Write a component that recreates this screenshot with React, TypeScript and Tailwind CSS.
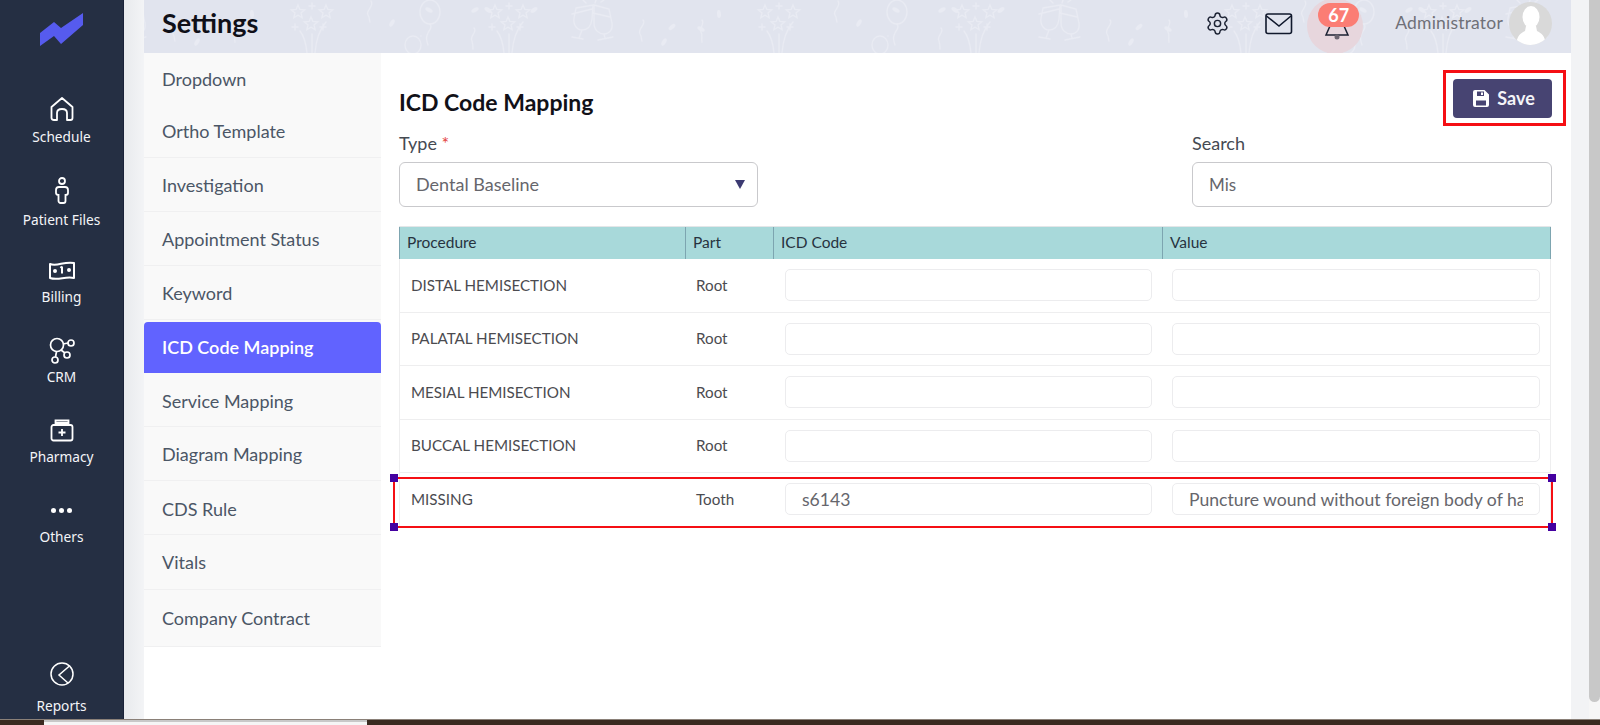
import { Settings } from "lucide-react"

const menu = [
  { name: "Dropdown", h: "h-[52.5px]", line: false },
  { name: "Ortho Template", h: "h-[52.5px]", line: true },
  { name: "Investigation", h: "h-[54px] pt-[2px]", line: true },
  { name: "Appointment Status", h: "h-[54px] pt-[2px]", line: true },
  { name: "Keyword", h: "h-[54px] pt-[2px]", line: true },
  { name: "ICD Code Mapping", h: "h-[53px] pt-[2px]", line: false, active: true },
  { name: "Service Mapping", h: "h-[54px] pt-[3px]", line: true },
  { name: "Diagram Mapping", h: "h-[54px] pt-[2px]", line: true },
  { name: "CDS Rule", h: "h-[54px] pt-[3px]", line: true },
  { name: "Vitals", h: "h-[55px]", line: true },
  { name: "Company Contract", h: "h-[57px]", line: true },
]

const rows = [
  { procedure: "DISTAL HEMISECTION", part: "Root", code: "", value: "" },
  { procedure: "PALATAL HEMISECTION", part: "Root", code: "", value: "" },
  { procedure: "MESIAL HEMISECTION", part: "Root", code: "", value: "" },
  { procedure: "BUCCAL HEMISECTION", part: "Root", code: "", value: "" },
  { procedure: "MISSING", part: "Tooth", code: "s6143", value: "Puncture wound without foreign body of hand" },
]

function starPoints(cx: number, cy: number, r: number) {
  const pts: string[] = []
  for (let i = 0; i < 10; i++) {
    const rad = i % 2 === 0 ? r : r * 0.45
    const a = -Math.PI / 2 + (i * Math.PI) / 5
    pts.push(`${cx + rad * Math.cos(a)},${cy + rad * Math.sin(a)}`)
  }
  return pts.join(" ")
}

function Fireworks({ x }: { x: number }) {
  return (
    <g transform={`translate(${x} 0)`}>
      <polygon points={starPoints(8, 12, 7)} />
      <polygon points={starPoints(36, 12, 7)} />
      <polygon points={starPoints(21, 24, 7)} />
      <path d="M22 19h0M22 3v6M19 6h6M2 27h6M5 24v6M30 27h6M33 24v6M10 31c4 5 6 12 7 22M22 34v19M36 22c-6 7-10 18-11 31" />
    </g>
  )
}

function HeaderPattern() {
  return (
    <svg className="absolute inset-0 h-full w-full" aria-hidden="true">
      <defs>
        <pattern id="party" width="467" height="53" patternUnits="userSpaceOnUse" patternTransform="translate(336 0)">
          <g fill="none" stroke="#e9ebf3" strokeWidth="1.3" strokeLinecap="round">
            <Fireworks x={7} />
            <Fireworks x={277} />
            <path d="M96 8l17 -3 -1 14c-1 8-5 11-10 11s-9-5-8-12zM92 14l20-5M102 30l-3 8M92 37l11 2" />
            <path d="M114 5l15 4 3 14c1 7-3 11-8 11s-10-4-10-11zM113 13l17 4M124 34l1 4M118 40l15-3" />
            <path d="M103 0l3 3M116 0l-1 3M124 0l-3 2" />
            <path d="M163 20c4 4-6 9-3 14 2 3 1 5 2 7M222 20c3 4-3 8-1 12 2 3 0 6 1 10M358 1c4 5-6 10-3 14 2 3 1 5 2 7M461 28c4 4-5 8-2 13 1 3 1 5 1 8" />
            <ellipse cx="417" cy="12" rx="10" ry="12" />
            <path d="M417 24c3 4-1 6 -2 9-2 4-2 6 0 12M408 36h0" />
            <ellipse cx="400" cy="45" rx="8" ry="9" />
          </g>
          <g fill="#e9ebf3">
            <ellipse cx="8" cy="10" rx="4" ry="2" transform="rotate(35 8 10)" />
            <ellipse cx="54" cy="10" rx="4" ry="2" transform="rotate(-35 54 10)" />
            <ellipse cx="192" cy="27" rx="4" ry="2" transform="rotate(-40 192 27)" />
            <ellipse cx="184" cy="42" rx="4" ry="2" transform="rotate(-60 184 42)" />
            <ellipse cx="239" cy="14" rx="4" ry="2" transform="rotate(85 239 14)" />
            <ellipse cx="221" cy="29" rx="4" ry="2" transform="rotate(30 221 29)" />
            <ellipse cx="379" cy="23" rx="4" ry="2" transform="rotate(-60 379 23)" />
            <ellipse cx="462" cy="10" rx="4" ry="2" transform="rotate(-30 462 10)" />
            <ellipse cx="416" cy="10" rx="4" ry="2" transform="rotate(30 416 10)" />
          </g>
        </pattern>
      </defs>
      <rect width="100%" height="100%" fill="url(#party)" />
    </svg>
  )
}

function NavItem({ label, children, size, labelGap }: { label: string; children: React.ReactNode; size: string; labelGap: string }) {
  return (
    <div className={`flex w-full flex-col items-center ${size}`}>
      <div className="flex h-[32px] w-full items-center justify-center">{children}</div>
      <span className={`text-[13.7px] leading-[20px] text-[#f4f5f8] ${labelGap}`}>{label}</span>
    </div>
  )
}

function Sidebar() {
  return (
    <aside className="flex w-[124px] shrink-0 flex-col items-center border-r border-[#1a2238] bg-[#252f43] font-['Noto_Sans',sans-serif]">
      <div className="flex h-[93px] w-full items-start justify-center pt-[12px]">
        <svg width="44" height="34" viewBox="41 12 44 34">
          <polygon points="41,33 55,22 62,28 84,13 84,25 62,44 55,36 41,46" fill="#565bee" />
        </svg>
      </div>
      <NavItem label="Schedule" size="h-[81px]" labelGap="mt-[2px]">
        <svg width="26" height="26" viewBox="0 0 26 26" fill="none" stroke="white" strokeWidth="1.8" strokeLinejoin="round">
          <path d="M2.5 11L13 2l10.500 9v11c0 1.500-1 2-2 2h-3.500v-7c0-2.500-2-4-5-4s-5 1.500-5 4v7H5c-1.500 0-2.500-.5-2.500-2z" />
        </svg>
      </NavItem>
      <NavItem label="Patient Files" size="h-[80px]" labelGap="mt-[4px]">
        <svg className="mt-[1px]" width="16" height="28" viewBox="0 0 16 28" fill="none" stroke="white" strokeWidth="1.8">
          <circle cx="8" cy="4" r="3" />
          <path d="M5 10h6c2 0 3 1 3 3v3c0 1.500-1 2-2.500 2v6c0 1-1 2-2 2h-3c-1 0-2-1-2-2v-6C3 18 2 17.500 2 16v-3c0-2 1-3 3-3z" />
        </svg>
      </NavItem>
      <NavItem label="Billing" size="h-[80px]" labelGap="mt-[1px]">
        <svg width="26" height="20" viewBox="0 0 26 20" fill="none" stroke="white" strokeWidth="2">
          <path d="M1 4c7 3 14-3 24-1v15c-9-2-16 3-24 0z" strokeLinejoin="round" />
          <circle cx="6" cy="11" r="1" fill="white" />
          <circle cx="20" cy="10" r="1" fill="white" />
          <path d="M13 6.500v7M11.500 8l1.500-1.500" />
        </svg>
      </NavItem>
      <NavItem label="CRM" size="h-[80px]" labelGap="mt-[1px]">
        <svg width="26" height="27" viewBox="0 0 26 27" fill="none" stroke="white" strokeWidth="1.700">
          <circle cx="8" cy="8" r="6.500" />
          <circle cx="22" cy="6" r="3" />
          <circle cx="18" cy="18" r="3" />
          <circle cx="6" cy="23" r="3" />
          <path d="M14 7l5-1M12 13l4 3M7.500 14.500L6.500 20" />
        </svg>
      </NavItem>
      <NavItem label="Pharmacy" size="h-[80px]" labelGap="mt-[1px]">
        <svg width="24" height="24" viewBox="0 0 24 24" fill="none" stroke="white" strokeWidth="1.800">
          <rect x="1.500" y="7" width="21" height="15.500" rx="2" />
          <path d="M5.500 7V2.500h13V7M6 5h12M12 11v7M8.500 14.500h7" />
        </svg>
      </NavItem>
      <NavItem label="Others" size="h-[80px]" labelGap="mt-[1px]">
        <div className="flex gap-[3px]">
          <span className="h-[5px] w-[5px] rounded-full bg-white" />
          <span className="h-[5px] w-[5px] rounded-full bg-white" />
          <span className="h-[5px] w-[5px] rounded-full bg-white" />
        </div>
      </NavItem>
      <div className="flex-1" />
      <div className="flex h-[57px] w-full flex-col items-center">
        <svg width="24" height="24" viewBox="0 0 24 24" fill="none" stroke="white" strokeWidth="1.500">
          <circle cx="12" cy="12" r="11" />
          <path d="M20 3.500L9 13l9 8" />
        </svg>
        <span className="mt-[10px] text-[13.7px] leading-[20px] text-[#f4f5f8]">Reports</span>
      </div>
    </aside>
  )
}

function TopBar() {
  return (
    <header className="relative flex h-[53px] items-center overflow-hidden bg-[#e1e4ee] pb-[6px] pl-[18px] pr-[19px]">
      <HeaderPattern />
      <h1 className="relative flex-1 text-[27px] font-bold text-[#101018]">Settings</h1>
      <Settings className="relative mr-[35px] h-[25px] w-[25px] text-[#1c2233]" strokeWidth={1.4} />
      <svg className="relative mr-[14px]" width="28" height="22" viewBox="0 0 28 22" fill="none" stroke="#10182c" strokeWidth="1.600">
        <rect x="1" y="1" width="25.500" height="19.500" rx="2" />
        <path d="M1.500 3l12.500 10L26 3" />
      </svg>
      <div className="relative mr-[32px] -mt-[2px] h-[56px] w-[56px] self-start rounded-full bg-[#e7d6dd]">
        <svg className="absolute left-[17px] top-[22px]" width="26" height="20" viewBox="0 0 26 20" fill="none" stroke="#1c2233" strokeWidth="1.500">
          <path d="M6 6L2 15h22l-4-9" />
          <circle cx="13" cy="17" r="2.500" fill="#6b6470" stroke="none" />
        </svg>
        <span className="absolute left-[11px] top-[5px] flex h-[24px] w-[41px] items-center justify-center rounded-full bg-[#fb7d74] text-[18px] font-bold text-white">67</span>
      </div>
      <span className="relative mr-[6px] text-[17.500px] tracking-[0.2px] text-[#6f7078]">Administrator</span>
      <div className="relative h-[43px] w-[43px] overflow-hidden rounded-full bg-[#d9d9d9]">
        <svg width="43" height="43" viewBox="0 0 43 43" fill="white">
          <ellipse cx="22" cy="15" rx="8.500" ry="11" />
          <path d="M17 24l-1 5c-4 2-8 4-9 14h30c-1-10-5-12-9-14l-1-5z" />
        </svg>
      </div>
    </header>
  )
}

function SettingsMenu() {
  return (
    <nav className="w-[237px] shrink-0 self-start">
      {menu.map((item) => (
        <div key={item.name} className={`flex items-center bg-[#f9f9f9] ${item.h} ${item.line ? "border-b border-[#f0f0f1]" : ""}`}>
          {item.active ? (
            <div className="flex h-full w-full items-center rounded-t-[4px] bg-[#6163ff] pl-[18px] text-[18px] font-semibold text-white">{item.name}</div>
          ) : (
            <span className="pl-[18px] text-[18px] text-[#4b5666]">{item.name}</span>
          )}
        </div>
      ))}
    </nav>
  )
}

function MappingTable() {
  return (
    <div className="mt-[19px] w-[1152px] border-t border-[#e4e6e8] text-[15.200px] text-[#4b4b50]">
      <div className="grid h-[32px] grid-cols-[287px_88px_389px_388px] items-center bg-[#a8d9da] text-[15.500px] text-[#27333f]">
        <div className="flex h-full items-center border-x border-[#7da5b0] pl-[7px]">Procedure</div>
        <div className="flex h-full items-center border-r border-[#7da5b0] pl-[7px]">Part</div>
        <div className="flex h-full items-center border-r border-[#7da5b0] pl-[7px]">ICD Code</div>
        <div className="flex h-full items-center border-r border-[#7da5b0] pl-[7px]">Value</div>
      </div>
      {rows.map((row) => (
        <div key={row.procedure} className="grid h-[53.500px] grid-cols-[287px_88px_389px_388px] items-center border-x border-b border-[#eeeeef]">
          <div className="pl-[11px]">{row.procedure}</div>
          <div className="pl-[9px]">{row.part}</div>
          <div className="pl-[10px]">
            <input readOnly value={row.code} className="h-[32px] w-[367px] rounded-[5px] border border-[#ececee] px-[16px] text-[17.600px] text-[#66666c] outline-none" />
          </div>
          <div className="pl-[8px]">
            <input readOnly value={row.value} className="h-[32px] w-[368px] rounded-[5px] border border-[#ececee] px-[16px] text-[17.600px] text-[#66666c] outline-none" />
          </div>
        </div>
      ))}
    </div>
  )
}

function Handle({ className }: { className: string }) {
  return <span className={`absolute h-[8px] w-[8px] bg-[#4400a0] ${className}`} />
}

function ContentPanel() {
  return (
    <section className="relative flex-1 pl-[18px] pr-[19px] pt-[26px]">
      <div className="flex items-end justify-between">
        <h2 className="mb-[1px] text-[23px] font-bold leading-[30px] text-[#111118]">ICD Code Mapping</h2>
        <button className="flex h-[39px] w-[99px] items-center justify-center gap-[8px] rounded-[4px] bg-[#474472] pl-[3px] text-[18px] font-bold text-[#f4f4f8]">
          <svg width="16" height="17" viewBox="0 0 16 17" fill="white">
            <path d="M0 2a2 2 0 0 1 2-2h9.500L16 4.500V15a2 2 0 0 1-2 2H2a2 2 0 0 1-2-2zM4 1.500V6h7V1.500zM8 2.500h2V5H8zM3 10.500V15.500h10v-5z" fillRule="evenodd" />
          </svg>
          Save
        </button>
      </div>
      <div className="mt-[16px] flex justify-between">
        <div>
          <label className="block h-[20px] text-[18px] leading-[18px] text-[#454a52]">
            Type <span className="text-[#e4433c]">*</span>
          </label>
          <div className="mt-[8px] flex h-[45px] w-[359px] items-center justify-between rounded-[6px] border border-[#c9c9cc] pl-[16px] pr-[12px] text-[18px] text-[#66666c]">
            Dental Baseline
            <svg width="10" height="9" viewBox="0 0 10 9">
              <polygon points="0,0 10,0 5,9" fill="#3c3a72" />
            </svg>
          </div>
        </div>
        <div>
          <label className="block h-[20px] text-[18px] leading-[18px] text-[#454a52]">Search</label>
          <input readOnly value="Mis" className="mt-[8px] h-[45px] w-[360px] rounded-[6px] border border-[#c9c9cc] px-[16px] text-[17px] text-[#66666c] outline-none" />
        </div>
      </div>
      <MappingTable />
      {/* annotation boxes drawn on top of the screenshot */}
      <div className="absolute left-[1062px] top-[17px] h-[56px] w-[123px] border-[3px] border-[#f50f14]" />
      <div className="absolute left-[12px] top-[424px] h-[51px] w-[1160px] border-2 border-[#f50f14]">
        <Handle className="-left-[5px] -top-[5px]" />
        <Handle className="-right-[5px] -top-[5px]" />
        <Handle className="-left-[5px] -bottom-[5px]" />
        <Handle className="-right-[5px] -bottom-[5px]" />
      </div>
    </section>
  )
}

export default function App() {
  return (
    <div className="flex h-[725px] w-[1600px] flex-col overflow-hidden bg-white font-[Lato,sans-serif]">
      <div className="flex h-[719px]">
        <Sidebar />
        <div className="w-[20px] shrink-0 bg-linear-to-r from-[#e8eaed] to-[#f3f4f6]" />
        <main className="flex w-[1427px] shrink-0 flex-col bg-white">
          <TopBar />
          <div className="flex flex-1">
            <SettingsMenu />
            <ContentPanel />
          </div>
        </main>
        <div className="w-[18px] shrink-0 bg-[#f2f3f5]" />
        <div className="flex-1 bg-[#f6f6f6]">
          <div className="h-[702px] rounded-b-[6px] bg-[#c8c8c8]" />
        </div>
      </div>
      <div className="flex h-[6px] border-t border-[#8a8078] bg-[#3a2a20]">
        <div className="w-[44px]" />
        <div className="w-[323px] border-t-2 border-[#c8c8c8] bg-[#f5f5f5]" />
      </div>
    </div>
  )
}
